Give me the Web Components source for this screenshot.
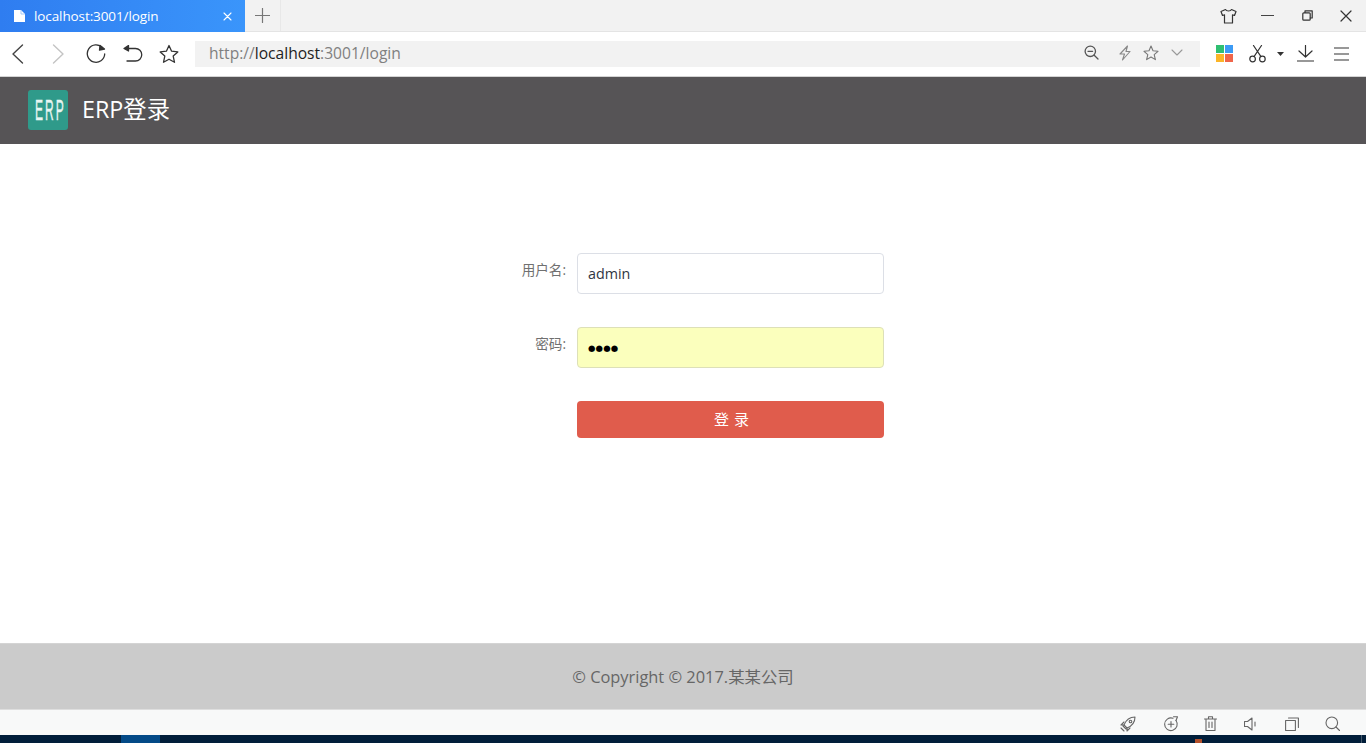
<!DOCTYPE html>
<html lang="zh">
<head>
<meta charset="utf-8">
<title>ERP登录</title>
<style>
  html, body { margin: 0; height: 100%; overflow: hidden; background: #fff; }
  body { display: flex; flex-direction: column; height: 743px; font-family: "Open Sans", "Noto Sans CJK SC", sans-serif; }
</style>
</head>
<body>
<browser-tabs></browser-tabs>
<browser-toolbar></browser-toolbar>
<erp-header>ERP登录</erp-header>
<login-form></login-form>
<erp-footer>© Copyright © 2017.某某公司</erp-footer>
<browser-status></browser-status>
<desk-taskbar></desk-taskbar>

<script>
const svg = (w, h, body, stroke = '#333', sw = 1.3) =>
  `<svg width="${w}" height="${h}" viewBox="0 0 ${w} ${h}" fill="none" stroke="${stroke}" stroke-width="${sw}" stroke-linecap="round" stroke-linejoin="round">${body}</svg>`;

class BrowserTabs extends HTMLElement {
  constructor() {
    super();
    this.attachShadow({ mode: 'open' });
  }
  connectedCallback() {
    this.shadowRoot.innerHTML = `
      <style>
        :host { display: flex; height: 32px; background: #f2f2f2; box-sizing: border-box; border-bottom: 1px solid #e4e4e4; }
        .tab { width: 245px; height: 32px; display: flex; align-items: center; padding: 0 13px 0 14px; box-sizing: border-box; gap: 9px;
          background: linear-gradient(90deg, #2f7df0, #3a95fb); color: #fff; font-size: 13.5px; letter-spacing: -.1px; }
        .tab span { flex: 1; }
        svg { display: block; }
        .new { width: 35px; height: 31px; display: flex; align-items: center; justify-content: center; border-right: 1px solid #e8e8e8; }
        .gap { flex: 1; }
        .win { width: 39px; height: 31px; display: flex; align-items: center; justify-content: center; }
      </style>
      <div class="tab">
        ${svg(11, 12, '<path d="M0 0H7L11 4V12H0Z" fill="#fff" stroke="none"/><path d="M7 0.5V4H10.5" stroke="#8fbdf8" stroke-width=".8"/>')}
        <span>localhost:3001/login</span>
        ${svg(9, 9, '<path d="M1 1L8 8M8 1L1 8"/>', '#fff', 1.1)}
      </div>
      <div class="new">${svg(15, 15, '<path d="M7.5 0.5V14.5M0.5 7.5H14.5"/>', '#777', 1.2)}</div>
      <div class="gap"></div>
      <div class="win">${svg(17, 16, '<path d="M5.5 1.5L1 3.5 2.5 7.5 4.5 6.8V15H12.5V6.8L14.5 7.5 16 3.5 11.5 1.5C10.5 3.5 6.5 3.5 5.5 1.5Z"/>', '#333', 1.2)}</div>
      <div class="win">${svg(13, 3, '<path d="M0.5 1.5H12.5"/>', '#444', 1.2)}</div>
      <div class="win" style="padding-left:2px;box-sizing:border-box">${svg(11, 11, '<path d="M3 2.5V0.8H10.2V8H8.2"/><rect x="0.8" y="2.8" width="7.4" height="7.4" rx="1"/>', '#333', 1.2)}</div>
      <div class="win" style="width:40px">${svg(12, 12, '<path d="M1 1L11 11M11 1L1 11"/>', '#333', 1.2)}</div>
    `;
  }
}

class BrowserToolbar extends HTMLElement {
  constructor() {
    super();
    this.attachShadow({ mode: 'open' });
  }
  connectedCallback() {
    const star = 'M10 1.5L12.6 7.2 18.8 7.9 14.2 12.1 15.5 18.3 10 15.2 4.5 18.3 5.8 12.1 1.2 7.9 7.4 7.2Z';
    this.shadowRoot.innerHTML = `
      <style>
        :host { display: flex; align-items: center; height: 45px; box-sizing: border-box; background: #fff; border-bottom: 1px solid #d4d4d4; padding: 0 0 1px 11px; }
        svg { display: block; flex: none; }
        .nav { display: flex; align-items: center; }
        .url { width: 1005px; height: 26px; margin-left: 16px; background: #f2f2f2; display: flex; align-items: center; padding: 0 17px 2px 14px; box-sizing: border-box; font-size: 15.6px; color: #808080; }
        .url b { font-weight: 400; color: #222; }
        .url span { flex: 1; }
        .tools { display: flex; align-items: center; margin-left: 16px; }
      </style>
      <div class="nav">
        ${svg(13, 20, '<path d="M11.5 1L2 10 11.5 19"/>', '#444', 1.4)}
        <div style="width:28px"></div>
        ${svg(13, 20, '<path d="M1.5 1L11 10 1.5 19"/>', '#c4c4c4', 1.4)}
        <div style="width:21px"></div>
        ${svg(20, 20, '<path d="M16.5 3.8A8.7 8.7 0 1 0 18.7 10"/><path d="M14 1.5L18.5 5 13.5 6Z" fill="#333"/>', '#333', 1.3)}
        <div style="width:17px"></div>
        ${svg(20, 18, '<path d="M4.5 3.5H12.5A6 6 0 0 1 12.5 16H4"/><path d="M5.5 0.5L1 3.5 5.5 6Z" fill="#333"/>', '#333', 1.3)}
        <div style="width:16px"></div>
        ${svg(20, 20, `<path d="${star}"/>`, '#333', 1.3)}
      </div>
      <div class="url">
        <span>http://<b>localhost</b>:3001/login</span>
        ${svg(15, 15, '<circle cx="6.3" cy="6.3" r="5.2"/><path d="M10.2 10.2L14 14M4 6.3H8.6"/>', '#555', 1.3)}
        <div style="width:20px"></div>
        ${svg(12, 16, '<path d="M8.5 1L1 9H5.5L3.5 15 11 6.5H7Z"/>', '#888', 1.1)}
        <div style="width:12px"></div>
        ${svg(16, 16, '<path d="M8 1L10 5.8 15 6.3 11.2 9.6 12.4 14.6 8 12 3.6 14.6 4.8 9.6 1 6.3 6 5.8Z"/>', '#777', 1.1)}
        <div style="width:12px"></div>
        ${svg(12, 7, '<path d="M1 1L6 6 11 1"/>', '#999', 1.1)}
      </div>
      <div class="tools">
        ${svg(17, 17, '<rect width="8" height="8" fill="#2fbf71" stroke="none"/><rect x="9" width="8" height="8" fill="#3c9bf5" stroke="none"/><rect y="9" width="8" height="8" fill="#fbb528" stroke="none"/><rect x="9" y="9" width="8" height="8" fill="#f0654a" stroke="none"/>')}
        <div style="width:16px"></div>
        ${svg(17, 18, '<circle cx="3.6" cy="14" r="2.8"/><circle cx="13.4" cy="14" r="2.8"/><path d="M5 11.6L12.5 0.5M12 11.6L4.5 0.5"/>', '#333', 1.2)}
        <div style="width:11px"></div>
        ${svg(7, 4, '<path d="M0 0H7L3.5 4Z" fill="#333" stroke="none"/>')}
        <div style="width:13px"></div>
        ${svg(17, 17, '<path d="M8.5 0.5V12M2 6L8.5 12 15 6M0.5 16H16.5"/>', '#333', 1.2)}
        <div style="width:20px"></div>
        ${svg(15, 14, '<path d="M0.5 1H14.5M0.5 7H14.5M0.5 13H14.5"/>', '#333', 1.2)}
      </div>
    `;
  }
}

class ErpHeader extends HTMLElement {
  constructor() {
    super();
    this.attachShadow({ mode: 'open' });
  }
  connectedCallback() {
    this.shadowRoot.innerHTML = `
      <style>
        :host { display: flex; align-items: center; height: 67px; box-sizing: border-box; background: #565456; padding: 0 0 1px 28px; gap: 14px; color: #fff; font-size: 23.3px; }
        .logo { width: 40px; height: 40px; border-radius: 3px; background: #2f9a8a; color: #e8f5f2; display: flex; align-items: center; justify-content: center; overflow: hidden; }
        .logo span { font-family: "Liberation Sans", sans-serif; font-size: 30px; letter-spacing: 5px; margin-right: -5px; transform: scaleX(.4); white-space: nowrap; -webkit-text-stroke: .4px #e8f5f2; }
        .title { margin-top: -4px; }
      </style>
      <div class="logo"><span>ERP</span></div>
      <div class="title"><slot></slot></div>
    `;
  }
}

class LoginForm extends HTMLElement {
  constructor() {
    super();
    this.attachShadow({ mode: 'open' });
  }
  connectedCallback() {
    this.shadowRoot.innerHTML = `
      <style>
        :host { display: block; height: 499px; box-sizing: border-box; padding: 109px 0 0 0; background: #fff; font-size: 13.6px; }
        .row { display: grid; grid-template-columns: 566px 307px; column-gap: 11px; margin-bottom: 33px; }
        .row:last-child { margin: 0; }
        label { text-align: right; color: #707070; line-height: 34px; }
        .field { height: 41px; box-sizing: border-box; border: 1px solid #dcdfe6; border-radius: 4px; padding: 0 10px; display: flex; align-items: center; font-size: 14.3px; color: #2f3642; background: #fff; }
        .pw { background: #fbffbd; border-color: #dde0b8; color: #000; font-size: 8.5px; letter-spacing: .2px; font-family: "DejaVu Sans", sans-serif; }
        button { grid-column: 2; height: 37px; border: 0; border-radius: 4px; background: #e05c4c; color: #fff; font: inherit; font-size: 15px; letter-spacing: 5px; padding: 0 0 2px 7px; }
      </style>
      <div class="row"><label>用户名:</label><div class="field">admin</div></div>
      <div class="row"><label>密码:</label><div class="field pw">●●●●</div></div>
      <div class="row"><button>登录</button></div>
    `;
  }
}

class ErpFooter extends HTMLElement {
  constructor() {
    super();
    this.attachShadow({ mode: 'open' });
  }
  connectedCallback() {
    this.shadowRoot.innerHTML = `
      <style>
        :host { display: flex; align-items: center; justify-content: center; height: 67px; box-sizing: border-box; background: #cbcbcb; border-top: 1px solid #d4d4d4; border-bottom: 1px solid #dedede; padding-bottom: 2px; color: #666; font-size: 16.4px; }
      </style>
      <slot></slot>
    `;
  }
}

class BrowserStatus extends HTMLElement {
  constructor() {
    super();
    this.attachShadow({ mode: 'open' });
  }
  connectedCallback() {
    this.shadowRoot.innerHTML = `
      <style>
        :host { display: flex; align-items: center; justify-content: flex-end; height: 25px; background: #f8f9f9; padding: 2px 26px 0 0; box-sizing: border-box; gap: 26px; }
        svg { display: block; }
        .a { margin-left: 1px; }
        .b { margin-left: -1px; }
        .c { margin-left: 1px; }
      </style>
      ${svg(16, 16, '<path d="M15 1C10 1 6 4 4 9L7 12C12 10 15 6 15 1Z"/><circle cx="10.5" cy="5.5" r="1.3"/><path d="M4 9H1L4 6M7 12V15L10 12M1 12L4 15M3 10L6 13"/>', '#666', 1.1)}
      <span class="a">${svg(16, 16, '<path d="M13 4.5A6.3 6.3 0 1 1 10 2.3"/><path d="M8 5.5V11M5.2 8.2H10.8M10.5 0.8L14.5 0.8 13 4.5"/>', '#666', 1.1)}</span>
      <span class="b">${svg(13, 15, '<path d="M0.5 3H12.5M4.5 3V0.8H8.5V3M2 3V14.5H11V3M5 6V11.5M8 6V11.5"/>', '#666', 1.1)}</span>
      <span class="c">${svg(15, 14, '<path d="M0.5 4.5H3.5L8 1V13L3.5 9.5H0.5ZM11 5V9"/>', '#666', 1.1)}</span>
      ${svg(14, 14, '<rect x="0.6" y="3.5" width="9.8" height="10"/><path d="M3.5 1H13.4V10.5"/>', '#666', 1.1)}
      ${svg(15, 15, '<circle cx="6.8" cy="6.8" r="5.8"/><path d="M11 11L14.5 14.5"/>', '#666', 1.1)}
    `;
  }
}

class DeskTaskbar extends HTMLElement {
  constructor() {
    super();
    this.attachShadow({ mode: 'open' });
  }
  connectedCallback() {
    this.shadowRoot.innerHTML = `
      <style>
        :host { display: flex; height: 8px; background: #011e3a; }
        .spacer { width: 121px; }
        .active { width: 39px; background: #034a87; }
        .rest { width: 1035px; }
        .spot { width: 7px; height: 4px; margin-top: 4px; background: #b4512c; }
        .fill { flex: 1; }
        .edge { width: 1px; background: #44586b; margin-right: 4px; }
      </style>
      <div class="spacer"></div><div class="active"></div><div class="rest"></div><div class="spot"></div><div class="fill"></div><div class="edge"></div>
    `;
  }
}

customElements.define('browser-tabs', BrowserTabs);
customElements.define('browser-toolbar', BrowserToolbar);
customElements.define('erp-header', ErpHeader);
customElements.define('login-form', LoginForm);
customElements.define('erp-footer', ErpFooter);
customElements.define('browser-status', BrowserStatus);
customElements.define('desk-taskbar', DeskTaskbar);
</script>
</body>
</html>
